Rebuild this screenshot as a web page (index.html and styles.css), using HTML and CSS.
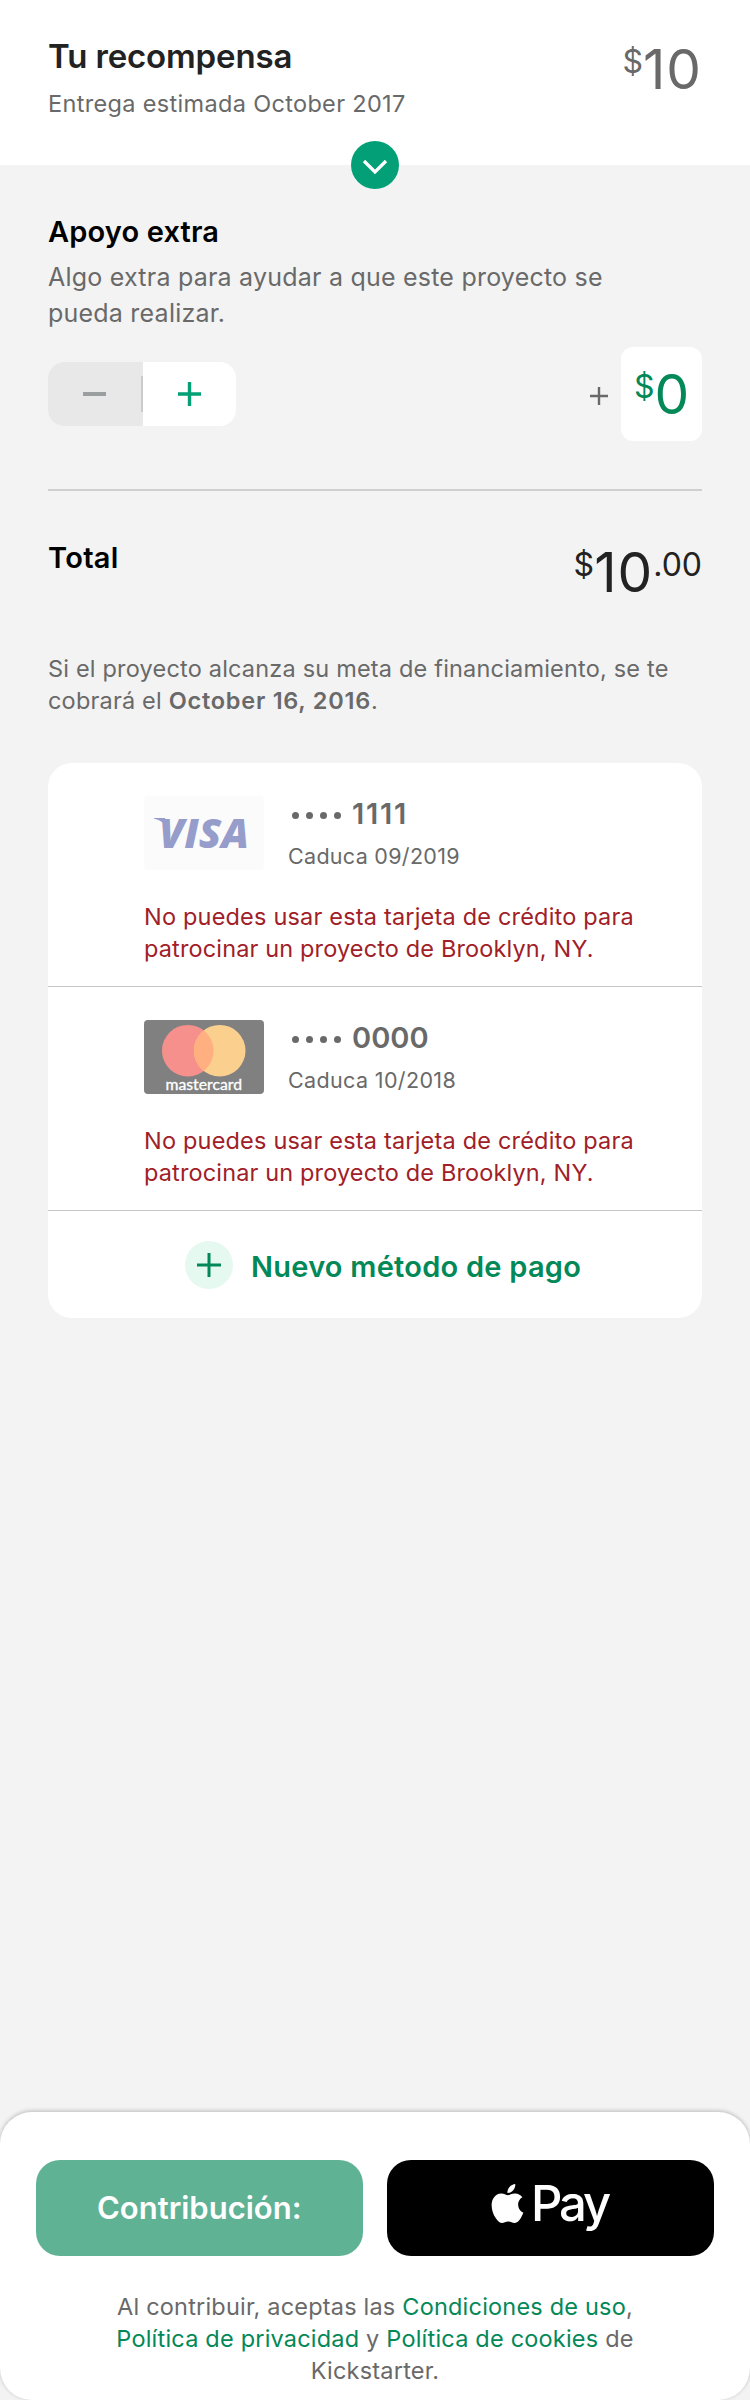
FILE: index.html
```html
<!DOCTYPE html>
<html lang="es">
<head>
<meta charset="utf-8">
<title>Contribución</title>
<link rel="stylesheet" href="styles.css">
</head>
<body>
<div class="page">
  <header class="reward">
    <div>
      <h1 class="reward-title"><span>Tu recompensa</span></h1>
      <p class="reward-date"><span>Entrega estimada October 2017</span></p>
    </div>
    <div class="price"><span class="price-small">$</span><span class="price-big">10</span></div>
    <button class="expand" aria-label="Expandir">
      <svg width="48" height="48" viewBox="0 0 48 48"><path d="M13 20l11 11 11-11" fill="none" stroke="#fff" stroke-width="3.2"/></svg>
    </button>
  </header>

  <main class="content">
    <h2 class="heading"><span>Apoyo extra</span></h2>
    <p class="support-text"><span class="l1">Algo extra para ayudar a que este proyecto se</span><br><span class="l2">pueda realizar.</span></p>
    <div class="support-row">
      <div class="stepper">
        <div class="step step-off"><svg width="24" height="24"><path d="M0 12h23" stroke="#9b9e9e" stroke-width="4"/></svg></div>
        <div class="step step-on"><svg width="24" height="24"><path d="M0 12h23M11.5 0v24" stroke="#05a075" stroke-width="3.4"/></svg></div>
      </div>
      <div class="extra">
        <svg class="extra-plus" width="18" height="18"><path d="M0 9h18M9 0v18" stroke="#696969" stroke-width="2.4"/></svg>
        <div class="extra-box"><span class="price-small">$</span><span class="price-big">0</span></div>
      </div>
    </div>
    <div class="total">
      <h2 class="heading heading-total"><span>Total</span></h2>
      <div class="price price-total"><span class="price-small">$</span><span class="price-big">10</span><span class="price-small cents">.00</span></div>
    </div>
    <p class="notice"><span class="l1">Si el proyecto alcanza su meta de financiamiento, se te</span><br><span class="l2">cobrará el <b>October 16, 2016</b>.</span></p>

    <section class="cards">
      <article class="card">
        <div class="card-top">
          <svg width="120" height="74" viewBox="0 0 120 74">
            <rect width="120" height="74" rx="4" fill="#fbfbfc"/>
            <path d="M10 22h11l4 12C21 27 16 24 10 22.8z" fill="#969dcb"/>
            <text class="visa" x="15" y="51.5" textLength="90" lengthAdjust="spacingAndGlyphs">VISA</text>
          </svg>
          <div>
            <p class="card-number"><span class="dots"><i></i><i></i><i></i><i></i></span><span class="digits ones">1111</span></p>
            <p class="card-date"><span>Caduca 09/2019</span></p>
          </div>
        </div>
        <p class="error"><span class="l1">No puedes usar esta tarjeta de crédito para</span><br><span class="l2">patrocinar un proyecto de Brooklyn, NY.</span></p>
      </article>
      <article class="card">
        <div class="card-top">
          <svg width="120" height="74" viewBox="0 0 120 74">
            <defs><clipPath id="lens"><circle cx="43.8" cy="30.7" r="25.8"/></clipPath></defs>
            <rect width="120" height="74" rx="4" fill="#808080"/>
            <circle cx="43.8" cy="30.7" r="25.8" fill="#f6908d"/>
            <circle cx="75.7" cy="30.7" r="25.8" fill="#fbcf8e"/>
            <circle cx="75.7" cy="30.7" r="25.8" fill="#ffaf80" clip-path="url(#lens)"/>
            <text class="mastercard" x="21.5" y="69.6" textLength="76.5" lengthAdjust="spacingAndGlyphs">mastercard</text>
          </svg>
          <div>
            <p class="card-number"><span class="dots"><i></i><i></i><i></i><i></i></span><span class="digits zeros">0000</span></p>
            <p class="card-date date-2"><span>Caduca 10/2018</span></p>
          </div>
        </div>
        <p class="error"><span class="l1">No puedes usar esta tarjeta de crédito para</span><br><span class="l2">patrocinar un proyecto de Brooklyn, NY.</span></p>
      </article>
      <div class="add">
        <svg width="48" height="48"><circle cx="24" cy="24" r="24" fill="#e6f9f1"/><path d="M12 24h24M24 12v24" stroke="#038858" stroke-width="3"/></svg>
        <span class="add-label">Nuevo método de pago</span>
      </div>
    </section>
  </main>

  <footer class="footer">
    <div class="buttons">
      <button class="btn pledge"><span>Contribución:</span></button>
      <button class="btn apple-pay" aria-label="Apple Pay">
        <svg width="39" height="39" viewBox="0 0 24 24" fill="#fff"><path d="M12.152 6.896c-.948 0-2.415-1.078-3.96-1.04-2.04.027-3.91 1.183-4.961 3.014-2.117 3.675-.546 9.103 1.519 12.09 1.013 1.454 2.208 3.09 3.792 3.039 1.52-.065 2.09-.987 3.935-.987 1.831 0 2.35.987 3.96.948 1.637-.026 2.676-1.48 3.676-2.948 1.156-1.688 1.636-3.325 1.662-3.415-.039-.013-3.182-1.221-3.22-4.857-.026-3.04 2.48-4.494 2.597-4.559-1.429-2.09-3.623-2.324-4.39-2.376-2-.156-3.675 1.09-4.61 1.09zM15.53 3.83c.843-1.012 1.4-2.427 1.245-3.83-1.207.052-2.662.805-3.532 1.818-.78.896-1.454 2.338-1.273 3.714 1.338.104 2.715-.688 3.559-1.701"/></svg>
        <span class="pay">Pay</span>
      </button>
    </div>
    <p class="terms"><span>Al contribuir, aceptas las <a>Condiciones de uso</a>,</span><br><span><a>Política de privacidad</a> y <a>Política de cookies</a> de</span><br><span>Kickstarter.</span></p>
  </footer>
</div>
</body>
</html>
```

FILE: styles.css
```css
* { box-sizing: border-box; }
body { margin: 0; background: #f3f3f3; font-family: Inter, "Liberation Sans", sans-serif; color: #696969; font-feature-settings: "calt" 0; }
h1, h2, p { margin: 0; }
button { border: 0; padding: 0; font-family: inherit; }
svg { display: block; flex: none; }
.page { height: 2400px; display: flex; flex-direction: column; }

.reward { position: relative; height: 165px; padding: 36px 48px 0; background: #fff; display: flex; justify-content: space-between; }
.reward-title { font-size: 33px; line-height: 40px; font-weight: 600; color: #222; letter-spacing: -0.15px; }
.reward-date { margin-top: 12px; font-size: 23.5px; line-height: 31px; letter-spacing: 0.33px; }
.expand { position: absolute; left: 351px; top: 141px; width: 48px; height: 48px; border-radius: 50%; background: #03a077; }

.price { display: flex; align-items: flex-start; margin-top: 3px; height: 60px; }
.price-big { font-size: 55px; line-height: 60px; letter-spacing: 1px; }
.price-small { font-size: 32px; line-height: 40px; margin-top: 3px; letter-spacing: 0; }

.content { flex: 1; padding: 49px 48px 0; }
.heading { font-size: 29px; line-height: 36px; font-weight: 600; color: #000; letter-spacing: 0.15px; }
.support-text { margin-top: 9px; font-size: 25px; line-height: 36px; letter-spacing: 0.22px; white-space: nowrap; }
.support-row { margin-top: 16px; height: 94px; display: flex; justify-content: space-between; }
.stepper { display: flex; width: 188px; height: 64px; margin-top: 15px; border-radius: 16px; overflow: hidden; background: #fff; }
.step { display: flex; align-items: center; justify-content: center; }
.step-off { width: 95px; padding-right: 1px; background: linear-gradient(#cacbcb, #cacbcb) right 14px / 2px 36px no-repeat #e8e8e8; }
.step-on { width: 93px; }
.extra { display: flex; gap: 13px; }
.extra-plus { margin-top: 40px; }
.extra-box { display: flex; align-items: flex-start; width: 81px; height: 94px; padding: 17px 0 0 13px; border-radius: 12px; background: #fff; color: #038858; }
.total { margin-top: 48px; padding-top: 49px; height: 113px; border-top: 2px solid #cfcfcf; display: flex; justify-content: space-between; }
.heading-total { letter-spacing: 0.3px; }
.price-total { color: #222; margin-top: 2px; }
.notice { margin-top: 51px; font-size: 23.5px; line-height: 32px; letter-spacing: 0.19px; white-space: nowrap; }
.notice b { font-weight: 600; letter-spacing: 0.75px; }

.cards { margin-top: 46px; background: #fff; border-radius: 24px; height: 555px; }
.card { height: 224px; padding: 33px 0 0 96px; border-bottom: 1px solid #c6c6c6; }
.card-top { display: flex; gap: 24px; height: 76px; }
.card-number { display: flex; font-size: 29px; line-height: 36px; font-weight: 600; }
.ones { letter-spacing: 1.7px; }
.dots { display: flex; gap: 7px; padding: 16px 0 0 4px; width: 64px; }
.dots i { width: 7px; height: 7px; border-radius: 50%; background: #696969; }
.card-date { margin-top: 8px; font-size: 21.5px; line-height: 32px; letter-spacing: 0.3px; }
.date-2 { letter-spacing: 0.36px; }
.error { margin-top: 29px; font-size: 23.5px; line-height: 32px; letter-spacing: 0.19px; color: #a12027; white-space: nowrap; }
.error .l2 { letter-spacing: 0.14px; }
.visa { font: italic 800 41px "Open Sans", sans-serif; fill: #969dcb; }
.mastercard { font: 400 14.5px Lato, sans-serif; fill: #fff; stroke: #fff; stroke-width: 0.3px; }
.add { display: flex; height: 107px; padding: 30px 0 0 137px; gap: 18px; color: #038858; }
.add-label { font-size: 29px; line-height: 36px; margin-top: 8px; font-weight: 600; letter-spacing: 0.25px; white-space: nowrap; }

.footer { height: 288px; background: #fff; border-radius: 32px; padding: 48px 36px 0; box-shadow: 0 -1px 4px rgba(0, 0, 0, 0.24); }
.buttons { display: flex; gap: 24px; }
.btn { width: 327px; height: 96px; border-radius: 24px; display: flex; color: #fff; }
.pledge { background: #60b295; font-size: 31px; line-height: 40px; font-weight: 600; padding: 28px 0 0 61px; }
.apple-pay { background: #000; padding: 24px 0 0 101px; }
.pay { font-size: 49px; line-height: 60px; margin-left: 4px; margin-top: -10px; font-weight: 500; letter-spacing: -3.2px; }
.terms { margin-top: 35px; text-align: center; font-size: 23.5px; line-height: 32px; letter-spacing: 0.2px; white-space: nowrap; }
.terms a { color: #038858; }
```
